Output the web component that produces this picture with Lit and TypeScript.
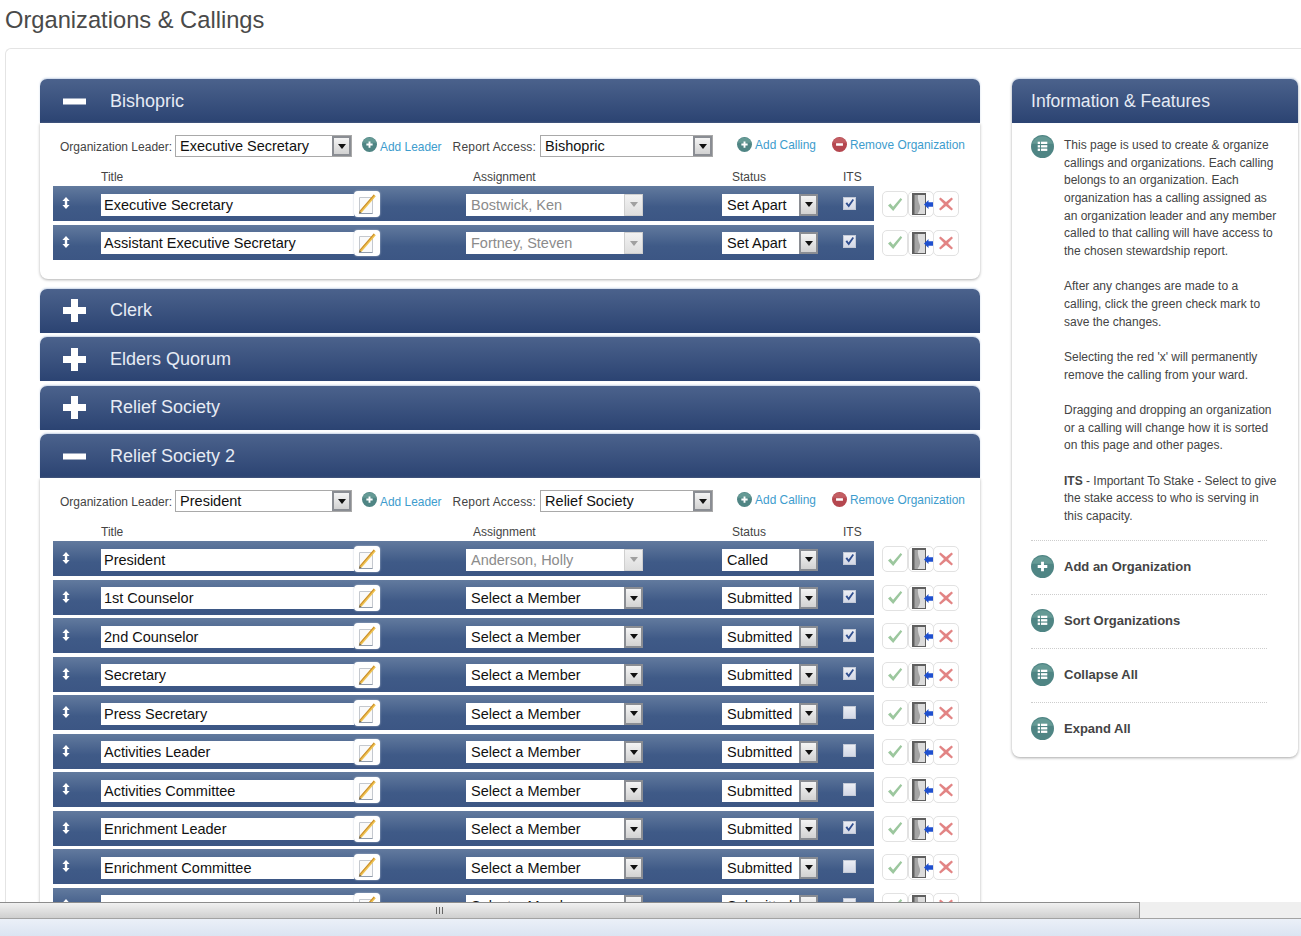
import { LitElement, html, css, svg } from 'lit';
import { customElement } from 'lit/decorators.js';
import { classMap } from 'lit/directives/class-map.js';

type Calling = {
  title: string;
  member: string;
  locked?: boolean;
  status: string;
  its: boolean;
};

type Org = {
  name: string;
  leader?: string;
  access?: string;
  callings?: Calling[];
};

const member = (title: string, its: boolean): Calling => ({
  title,
  member: 'Select a Member',
  status: 'Submitted',
  its,
});

const ORGS: Org[] = [
  {
    name: 'Bishopric',
    leader: 'Executive Secretary',
    access: 'Bishopric',
    callings: [
      { title: 'Executive Secretary', member: 'Bostwick, Ken', locked: true, status: 'Set Apart', its: true },
      { title: 'Assistant Executive Secretary', member: 'Fortney, Steven', locked: true, status: 'Set Apart', its: true },
    ],
  },
  { name: 'Clerk' },
  { name: 'Elders Quorum' },
  { name: 'Relief Society' },
  {
    name: 'Relief Society 2',
    leader: 'President',
    access: 'Relief Society',
    callings: [
      { title: 'President', member: 'Anderson, Holly', locked: true, status: 'Called', its: true },
      member('1st Counselor', true),
      member('2nd Counselor', true),
      member('Secretary', true),
      member('Press Secretary', false),
      member('Activities Leader', false),
      member('Activities Committee', false),
      member('Enrichment Leader', true),
      member('Enrichment Committee', false),
      member('', false),
    ],
  },
];

const listGlyph = svg`
  <g fill="#fff">
    <rect x="7" y="7" width="2.4" height="2.4" /><rect x="10.4" y="7" width="6.6" height="2.4" />
    <rect x="7" y="10.6" width="2.4" height="2.4" /><rect x="10.4" y="10.6" width="6.6" height="2.4" />
    <rect x="7" y="14.2" width="2.4" height="2.4" /><rect x="10.4" y="14.2" width="6.6" height="2.4" />
  </g>`;

const plusGlyph = svg`<path d="M10.5 7h3v3.5H17v3h-3.5V17h-3v-3.5H7v-3h3.5z" fill="#fff" />`;
const minusGlyph = svg`<rect x="6.5" y="10" width="11" height="4" fill="#fff" />`;

const ball = (glyph: unknown, size: number, red = false) => html`
  <svg class="ball" width=${size} height=${size} viewBox="0 0 24 24">
    <circle cx="12" cy="12" r="12" fill=${red ? '#b5474f' : '#4f8584'} />
    <path d="M1 9a11.5 11 0 0 1 22 0z" fill=${red ? '#c9686c' : '#6fa39c'} opacity="0.7" />
    ${glyph}
  </svg>
`;

const handleIcon = html`
  <svg width="8" height="12" viewBox="0 0 8 12">
    <path d="M4 0l3.6 4H5.2v4h2.4L4 12 .4 8h2.4V4H.4z" fill="#fff" />
  </svg>
`;

const pencilIcon = html`
  <svg width="20" height="22" viewBox="0 0 20 22">
    <path d="M2.500 4.500h13v16h-13z" fill="#fafafa" stroke="#c4c8ce" />
    <path d="M2.500 20.500h13" stroke="#8f9bab" />
    <path d="M2.500 18L16.800 1.500l2 1.700L4.500 19.800z" fill="#efc24f" />
    <path d="M2.500 18L16.800 1.500l.8.700L3.300 18.700z" fill="#c98d2e" />
    <path d="M2.500 18l-.7 2.700 2.700-.9z" fill="#7d6a45" />
  </svg>
`;

const checkIcon = html`
  <svg width="16" height="15" viewBox="0 0 16 15">
    <path d="M1 8.400l2.400-2 2.700 3.400L13.600 1 15.200 2.400 6.200 14z" fill="#9cc79e" />
  </svg>
`;

const doorIcon = html`
  <svg width="24" height="24" viewBox="0 0 24 24">
    <rect x="3" y="1" width="14" height="22" fill="#5f5f5f" />
    <path d="M5.500 3H16v19H5.500z" fill="#a4a4a4" />
    <path d="M9 3h7v19H8.500c2-3 3.500-6 2-9.500C9.500 10 8.500 6 9 3z" fill="#dcdcdc" />
    <path d="M15 12.500l4.500-4.500v2.200H24v4.600h-4.500V17z" fill="#1f50cf" />
  </svg>
`;

const crossIcon = html`
  <svg width="14" height="14" viewBox="0 0 14 14">
    <path d="M1.500.5L7 5 12.500.5 14 2 9 7l5 5-1.500 1.500L7 9l-5.500 4.500L0 12l5-5-5-5z" fill="#e28484" />
  </svg>
`;

@customElement('app-root')
export class AppRoot extends LitElement {
  static styles = css`
    :host {
      display: block;
      height: 936px;
      overflow: hidden;
      font-family: 'Liberation Sans', Arial, sans-serif;
      color: #444;
      background: #fff;
    }

    .shell {
      display: flex;
      flex-direction: column;
      height: 936px;
    }

    .viewport {
      flex: 1;
      min-height: 0;
      overflow: hidden;
    }

    h1 {
      margin: 0;
      height: 48px;
      padding-left: 5px;
      box-sizing: border-box;
      font-size: 23.700px;
      font-weight: 400;
      line-height: 40px;
      color: #4a4a4a;
    }

    .page {
      display: flex;
      align-items: flex-start;
      gap: 32px;
      margin-left: 5px;
      padding: 30px 0 0 34px;
      border: 1px solid #e4e4e4;
      border-right: 0;
      border-bottom: 0;
      border-top-left-radius: 6px;
    }

    .orgs {
      flex: none;
      width: 940px;
    }

    .org {
      margin-bottom: 4.5px;
    }

    .org.open {
      margin-bottom: 10px;
    }

    .bar {
      display: flex;
      align-items: center;
      height: 44px;
      border-radius: 7px 7px 0 0;
      background: linear-gradient(#4b628c, #2b4372);
      box-shadow: 0 -1px 2px #c6d3e6;
      color: #e6ebf4;
      font-size: 18px;
    }

    .toggle {
      display: flex;
      box-sizing: border-box;
      width: 70px;
      padding-left: 23px;
    }

    .org-body {
      padding: 12px 0 19px 13px;
      border-radius: 0 0 8px 8px;
      background: #fff;
      box-shadow: 0 1px 3px #b0b0b0;
    }

    .tools {
      display: flex;
      align-items: flex-start;
      height: 22px;
      padding-left: 7px;
      font-size: 12px;
      color: #444;
    }

    .tools .label {
      line-height: 24px;
      white-space: nowrap;
    }

    .label.leader {
      margin-right: 3px;
    }

    .label.access {
      margin: 0 4px 0 1px;
      letter-spacing: 0.2px;
    }

    .link {
      display: flex;
      align-items: flex-start;
      gap: 3px;
      padding-top: 2px;
      white-space: nowrap;
      font-size: 11.900px;
      line-height: 16px;
      color: #3d9ccd;
    }

    .link span {
      position: relative;
      top: 2px;
    }

    .link.raised span {
      top: 0;
    }

    .link.add-leader {
      margin: 0 10px;
    }

    .link.add-calling {
      margin: 0 16px 0 24px;
    }

    .cols,
    .row {
      display: grid;
      grid-template-columns: 48px 365px 256px 121px 1fr;
      align-items: center;
      width: 821px;
    }

    .cols {
      height: 29px;
      align-items: end;
      padding-bottom: 2px;
      box-sizing: border-box;
      font-size: 12px;
      line-height: 14px;
      color: #444;
    }

    .cols .assign {
      padding-left: 7px;
    }

    .cols .state {
      padding-left: 10px;
    }

    .calling {
      display: flex;
      align-items: center;
      height: 35px;
      margin-bottom: 3.5px;
    }

    .calling:last-child {
      margin-bottom: 0;
    }

    .row {
      box-sizing: border-box;
      height: 35px;
      padding-top: 2px;
      background: linear-gradient(#627a9e, #3f5a87 60%, #3c5684);
    }

    .handle {
      display: flex;
      margin-bottom: 3px;
      padding-left: 9px;
    }

    .title-cell {
      display: flex;
      align-items: center;
    }

    .field {
      box-sizing: border-box;
      width: 253px;
      height: 22px;
      padding-left: 3px;
      background: #fff;
      color: #111;
      font-size: 14.500px;
      line-height: 22px;
      white-space: nowrap;
      overflow: hidden;
    }

    .edit {
      display: flex;
      flex: none;
      align-items: center;
      justify-content: center;
      box-sizing: border-box;
      width: 26px;
      height: 26px;
      margin-bottom: 1px;
      border-radius: 4px;
      background: #fff;
      box-shadow: 0 0 2px #bcc6d4;
    }

    .select {
      display: flex;
      box-sizing: border-box;
      height: 22px;
      background: #fff;
      color: #111;
      font-size: 14.500px;
      line-height: 22px;
      white-space: nowrap;
    }

    .select .value {
      flex: 1;
      padding-left: 5px;
      overflow: hidden;
    }

    .select .arrow {
      display: flex;
      flex: none;
      align-items: center;
      justify-content: center;
      box-sizing: border-box;
      width: 19px;
      border: 2px solid #8a8d93;
      background: linear-gradient(#f4f4f4, #d2d2d2);
    }

    .select .arrow::after {
      content: '';
      border: 4.500px solid transparent;
      border-top: 5px solid #111;
      border-bottom: 0;
    }

    .select.locked {
      color: #8b8b8b;
    }

    .select.locked .arrow {
      border: 1px solid #cfcfcf;
      background: linear-gradient(#f2f2f2, #dedede);
    }

    .select.locked .arrow::after {
      border-top-color: #a0a0a0;
    }

    .tools .select {
      border: 1px solid #a9a9a9;
      line-height: 20px;
    }

    .tools .select .value {
      padding-left: 4px;
    }

    .select.leader {
      width: 177px;
    }

    .select.access {
      width: 173px;
    }

    .select.member {
      width: 177px;
    }

    .select.status {
      width: 96px;
    }

    .box {
      display: flex;
      align-items: center;
      justify-content: center;
      box-sizing: border-box;
      width: 13px;
      height: 13px;
      margin-bottom: 3px;
      border: 1px solid #c3c9d6;
      background: linear-gradient(#eceef4, #d3d8e6);
    }

    .actions {
      display: flex;
      padding-top: 1px;
      margin-left: 8px;
    }

    .action {
      display: flex;
      align-items: center;
      justify-content: center;
      box-sizing: border-box;
      width: 26px;
      height: 26px;
      margin-right: -0.500px;
      border: 1px solid #e2e2e2;
      border-radius: 5px;
      background: #fff;
    }

    .side {
      flex: none;
      width: 286px;
      border-radius: 7px 7px 8px 8px;
      background: #fff;
      box-shadow: 0 1px 3px #a8a8a8;
    }

    .side .bar {
      padding-left: 19px;
      font-size: 17.600px;
    }

    .intro {
      display: flex;
      gap: 10px;
      padding: 12px 0 0 19px;
    }

    .intro .ball {
      flex: none;
    }

    .intro p {
      margin: 0;
      padding-top: 2px;
      font-size: 12px;
      line-height: 17.670px;
      color: #444;
      white-space: nowrap;
    }

    .features {
      padding: 14px 0 1px;
    }

    .feature {
      display: flex;
      align-items: center;
      gap: 10px;
      box-sizing: border-box;
      height: 54px;
      margin: 0 31px 0 19px;
      padding-bottom: 2px;
      border-top: 1px dotted #cdcdcd;
      font-size: 13px;
      font-weight: 700;
      color: #444;
    }

    .track {
      display: flex;
      flex: none;
      box-sizing: border-box;
      height: 17px;
      border-bottom: 1px solid #a3a3a3;
      background: #efefef;
    }

    .thumb {
      display: flex;
      align-items: center;
      justify-content: center;
      box-sizing: border-box;
      width: 1140px;
      padding-right: 258px;
      border-top: 1px solid #8d8d8d;
      border-right: 1px solid #9a9a9a;
      background: linear-gradient(#f1f1f1, #cfcfcf);
    }

    .grip {
      width: 9px;
      height: 7px;
      background: repeating-linear-gradient(90deg, #666 0 1px, transparent 1px 3px);
    }

    .tray {
      flex: none;
      height: 17px;
      background: linear-gradient(#ebf0f8, #dbe4f2);
    }
  `;

  private renderSelect(value: string, kind: string, locked = false) {
    return html`
      <div class="select ${classMap({ [kind]: true, locked })}">
        <span class="value">${value}</span>
        <span class="arrow"></span>
      </div>
    `;
  }

  private renderCalling(calling: Calling) {
    return html`
      <div class="calling">
        <div class="row">
          <div class="handle">${handleIcon}</div>
          <div class="title-cell">
            <div class="field">${calling.title}</div>
            <div class="edit">${pencilIcon}</div>
          </div>
          ${this.renderSelect(calling.member, 'member', !!calling.locked)}
          ${this.renderSelect(calling.status, 'status')}
          <div class="box">
            ${calling.its
              ? html`<svg width="11" height="11" viewBox="0 0 11 11">
                  <path d="M1.500 5.500l1.600-1.300L4.600 6.400 8.600 1l1.400 1-5.200 7.500z" fill="#2f4e8f" />
                </svg>`
              : ''}
          </div>
        </div>
        <div class="actions">
          <div class="action">${checkIcon}</div>
          <div class="action">${doorIcon}</div>
          <div class="action">${crossIcon}</div>
        </div>
      </div>
    `;
  }

  private renderOrg(org: Org) {
    const open = !!org.callings;
    return html`
      <section class="org ${classMap({ open })}">
        <header class="bar">
          <span class="toggle">
            <svg width="23" height="23" viewBox="0 0 23 23">
              ${open
                ? svg`<rect y="8.500" width="23" height="6" fill="#fff" />`
                : svg`<path d="M8 0h7v8h8v7h-8v8H8v-8H0V8h8z" fill="#fff" />`}
            </svg>
          </span>
          ${org.name}
        </header>
        ${open
          ? html`
              <div class="org-body">
                <div class="tools">
                  <span class="label leader">Organization Leader:</span>
                  ${this.renderSelect(org.leader!, 'leader')}
                  <a class="link add-leader">${ball(plusGlyph, 15)}<span>Add Leader</span></a>
                  <span class="label access">Report Access:</span>
                  ${this.renderSelect(org.access!, 'access')}
                  <a class="link raised add-calling">${ball(plusGlyph, 15)}<span>Add Calling</span></a>
                  <a class="link raised">${ball(minusGlyph, 15, true)}<span>Remove Organization</span></a>
                </div>
                <div class="cols">
                  <span></span>
                  <span>Title</span>
                  <span class="assign">Assignment</span>
                  <span class="state">Status</span>
                  <span>ITS</span>
                </div>
                ${org.callings!.map((c) => this.renderCalling(c))}
              </div>
            `
          : ''}
      </section>
    `;
  }

  render() {
    return html`
      <div class="shell">
        <div class="viewport">
          <h1>Organizations &amp; Callings</h1>
          <div class="page">
            <div class="orgs">${ORGS.map((org) => this.renderOrg(org))}</div>
            <aside class="side">
              <header class="bar">Information &amp; Features</header>
              <div class="intro">
                ${ball(listGlyph, 23)}
                <p>
                  This page is used to create &amp; organize<br />
                  callings and organizations. Each calling<br />
                  belongs to an organization. Each<br />
                  organization has a calling assigned as<br />
                  an organization leader and any member<br />
                  called to that calling will have access to<br />
                  the chosen stewardship report.<br /><br />
                  After any changes are made to a<br />
                  calling, click the green check mark to<br />
                  save the changes.<br /><br />
                  Selecting the red 'x' will permanently<br />
                  remove the calling from your ward.<br /><br />
                  Dragging and dropping an organization<br />
                  or a calling will change how it is sorted<br />
                  on this page and other pages.<br /><br />
                  <b>ITS</b> - Important To Stake - Select to give<br />
                  the stake access to who is serving in<br />
                  this capacity.
                </p>
              </div>
              <div class="features">
                <div class="feature">${ball(plusGlyph, 23)}Add an Organization</div>
                <div class="feature">${ball(listGlyph, 23)}Sort Organizations</div>
                <div class="feature">${ball(listGlyph, 23)}Collapse All</div>
                <div class="feature">${ball(listGlyph, 23)}Expand All</div>
              </div>
            </aside>
          </div>
        </div>
        <div class="track">
          <div class="thumb"><span class="grip"></span></div>
        </div>
        <div class="tray"></div>
      </div>
    `;
  }
}

declare global {
  interface HTMLElementTagNameMap {
    'app-root': AppRoot;
  }
}
